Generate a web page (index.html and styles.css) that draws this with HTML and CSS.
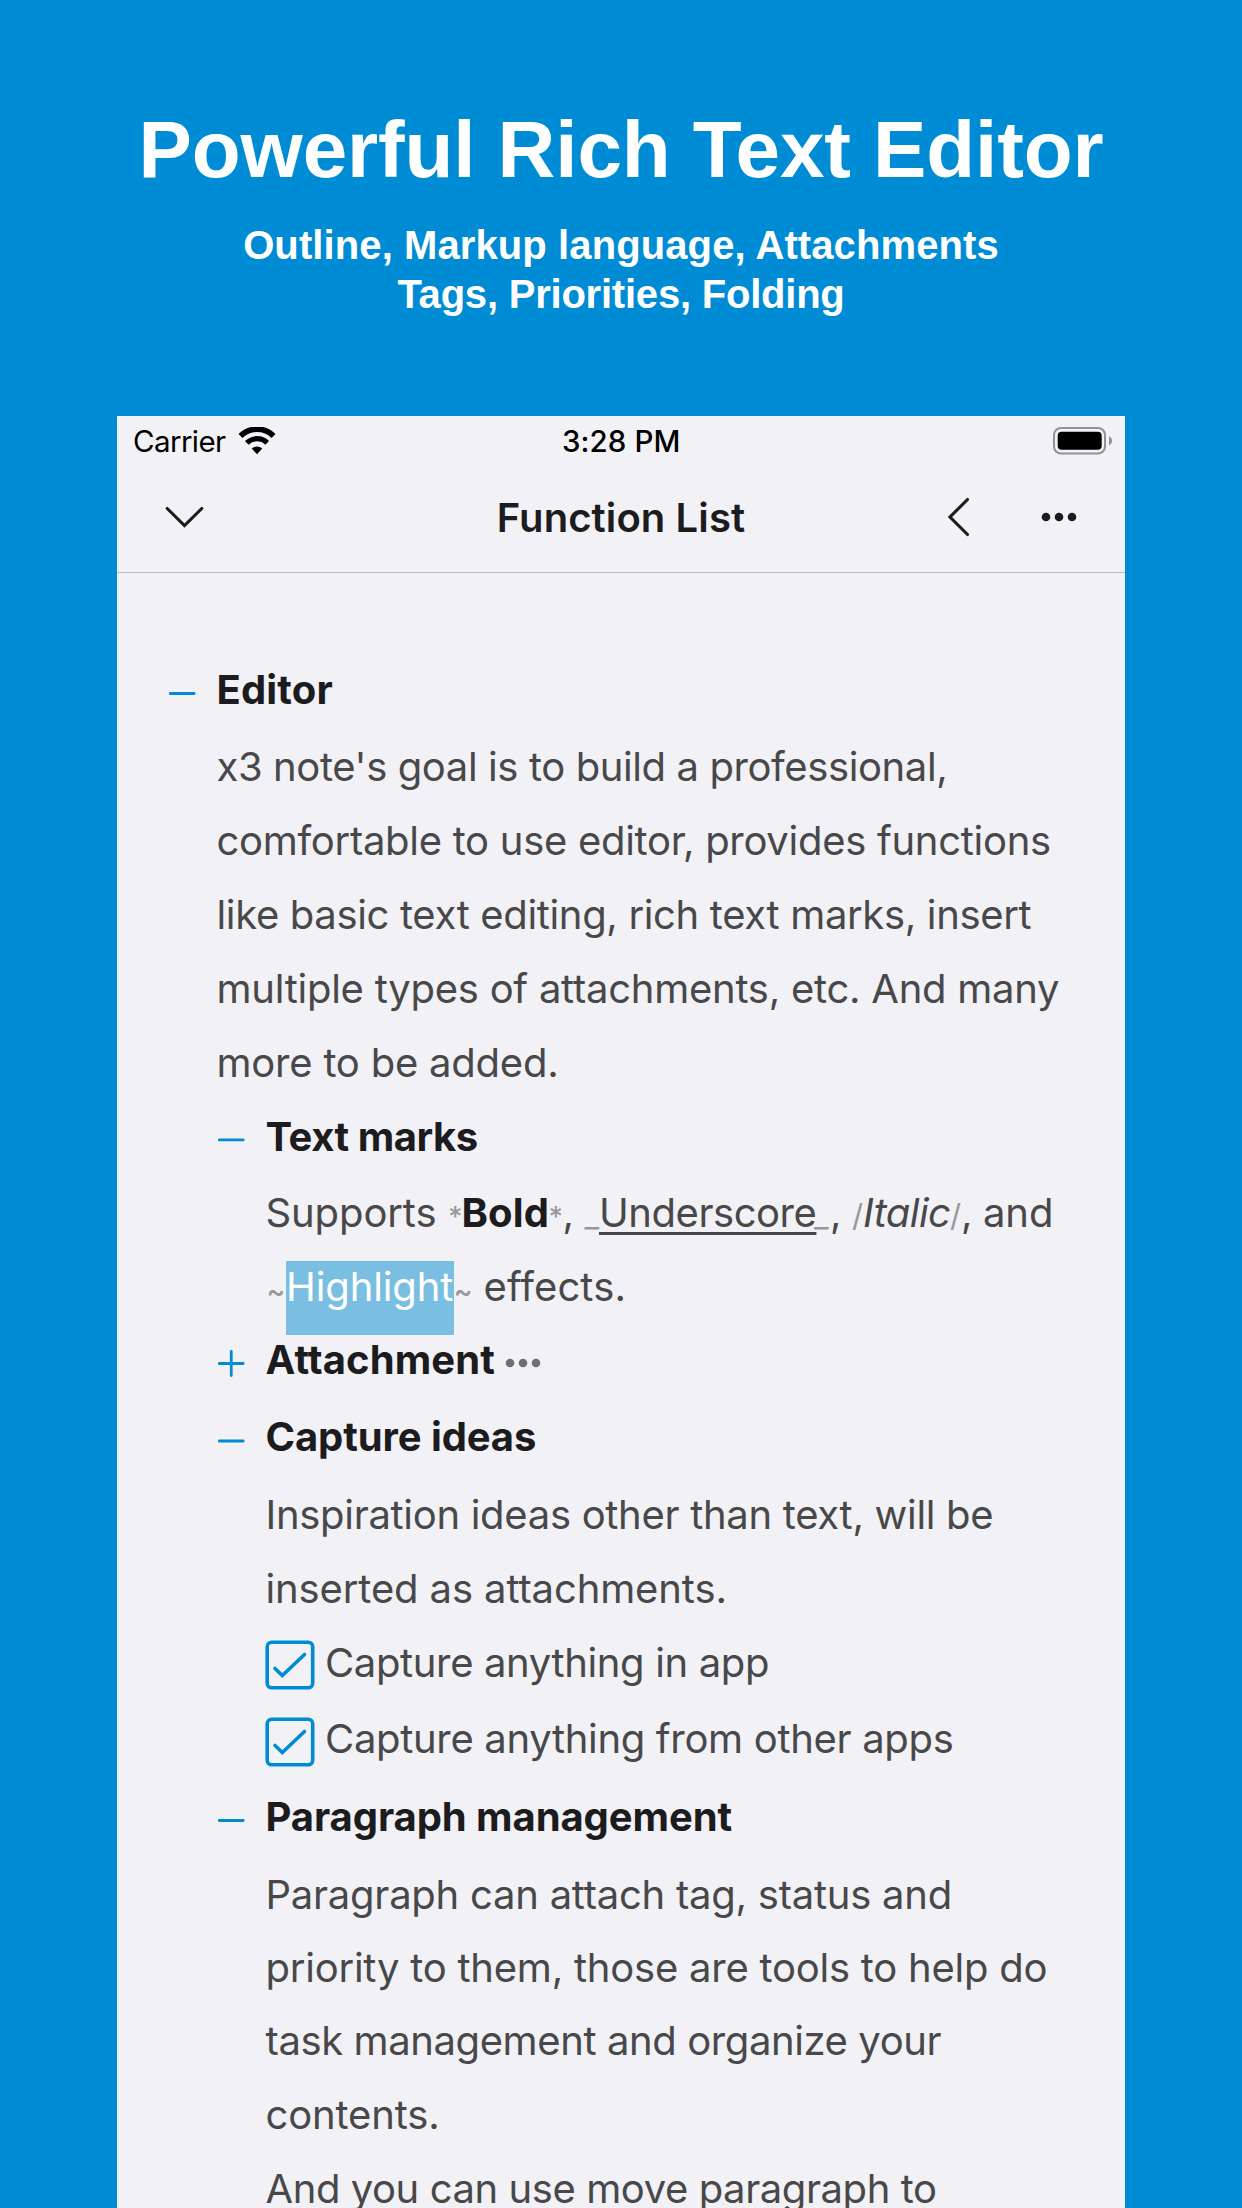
FILE: index.html
```html
<!DOCTYPE html>
<html lang="en">
<head>
<meta charset="utf-8">
<title>Powerful Rich Text Editor</title>
<link rel="stylesheet" href="styles.css">
</head>
<body>
<header class="promo">
  <h1 class="promo-title">Powerful Rich Text Editor</h1>
  <p class="promo-sub"><span class="sub-a">Outline, Markup language, Attachments</span><br><span class="sub-b">Tags, Priorities, Folding</span></p>
</header>
<main class="phone">
  <div class="status">
    <div class="carrier"><span class="carrier-name">Carrier</span>
      <svg class="wifi" width="38" height="28" viewBox="0 0 38 28"><path d="M2.500 8.900A23.500 23.500 0 0 1 35.500 8.900" fill="none" stroke="#000" stroke-width="5.600"/><path d="M8.800 15.900A14.500 14.500 0 0 1 29.200 15.900" fill="none" stroke="#000" stroke-width="5.200"/><path d="M13.700 21.600A7.800 7.800 0 0 1 24.300 21.600L19 27.200Z"/></svg>
    </div>
    <div class="time">3:28 PM</div>
    <svg class="battery" width="60" height="28" viewBox="0 0 60 28"><rect x="1" y="1" width="51" height="25.500" rx="7" fill="none" stroke="#929196" stroke-width="2"/><rect x="4.700" y="4.800" width="44" height="18" rx="4" fill="#000"/><path d="M56 9.200Q59 10.500 59 13.800T56 18.400Z" fill="#929196"/></svg>
  </div>
  <nav class="navbar">
    <svg class="chevron" width="40" height="40" viewBox="0 0 40 40"><path d="M3.200 11.500 20.500 28.500 37.800 11.500" fill="none" stroke="#1c1c1e" stroke-width="3.100" stroke-linecap="round"/></svg>
    <div class="nav-title">Function List</div>
    <div class="nav-actions">
      <svg width="24" height="40" viewBox="0 0 24 40"><path d="M20.500 2.500 3 20 20.500 37.500" fill="none" stroke="#1c1c1e" stroke-width="3.100" stroke-linecap="round"/></svg>
      <svg width="36" height="10" viewBox="0 0 36 10" fill="#1c1c1e"><circle cx="5" cy="5" r="4.300"/><circle cx="18" cy="5" r="4.300"/><circle cx="31" cy="5" r="4.300"/></svg>
    </div>
  </nav>
  <article class="doc">
    <section>
      <h2 class="heading gap-3"><svg class="toggle" width="27" height="27" viewBox="0 0 27 27"><path d="M1.300 13.500H25.200"/></svg><span class="w-editor">Editor</span></h2>
      <div class="body">
        <p class="line t-goal">x3 note's goal is to build a professional,</p>
        <p class="line t-comf">comfortable to use editor, provides functions</p>
        <p class="line t-like">like basic text editing, rich text marks, insert</p>
        <p class="line t-mult">multiple types of attachments, etc. And many</p>
        <p class="line t-more">more to be added.</p>
        <section>
          <h3 class="heading sub gap-2"><svg class="toggle" width="27" height="27" viewBox="0 0 27 27"><path d="M1.300 12.800H25.200"/></svg><span class="w-marks">Text marks</span></h3>
          <div class="body sub">
            <p class="line t-text"><span class="s-supports">Supports </span><span class="mark m-star">*</span><b class="s-bold">Bold</b><span class="mark m-star2">*</span><span class="s-comma">,</span><span class="mark m-us">_</span><u class="s-under">Underscore</u><span class="mark m-us2">_</span><span class="s-comma">,</span><span class="mark m-slash">/</span><i class="s-italic">Italic</i><span class="mark m-slash">/</span><span class="s-comma">,</span>and</p>
            <p class="line t-text less-1"><span class="mark m-tilde">~</span><mark class="s-high">Highlight</mark><span class="mark m-tilde2">~</span> <span class="s-effects">effects.</span></p>
          </div>
        </section>
        <section>
          <h3 class="heading sub gap-3"><svg class="toggle" width="27" height="27" viewBox="0 0 27 27"><path d="M1.300 13.500H25.200M13.250 1.500V25.500"/></svg><span class="w-attach">Attachment</span><svg class="folded" width="36" height="10" viewBox="0 0 36 10" fill="#6f6e72"><circle cx="5" cy="5" r="4.300"/><circle cx="18" cy="5" r="4.300"/><circle cx="31" cy="5" r="4.300"/></svg></h3>
        </section>
        <section>
          <h3 class="heading sub gap-4"><svg class="toggle" width="27" height="27" viewBox="0 0 27 27"><path d="M1.300 14H25.200"/></svg><span class="w-ideas">Capture ideas</span></h3>
          <div class="body sub">
            <p class="line t-insp">Inspiration ideas other than text, will be</p>
            <p class="line t-inserted">inserted as attachments.</p>
            <p class="line check gap-2"><svg width="50" height="50" viewBox="0 0 50 50"><rect x="2.200" y="2.200" width="45.500" height="45.500" rx="4.500"/><path d="M10 28.500 17.300 35.500 39.500 14.500"/></svg><span class="t-inapp">Capture anything in app</span></p>
            <p class="line check check-low gap-4"><svg width="50" height="50" viewBox="0 0 50 50"><rect x="2.200" y="2.200" width="45.500" height="45.500" rx="4.500"/><path d="M10 28.500 17.300 35.500 39.500 14.500"/></svg><span class="t-from">Capture anything from other apps</span></p>
          </div>
        </section>
        <section>
          <h3 class="heading sub gap-4"><svg class="toggle" width="27" height="27" viewBox="0 0 27 27"><path d="M1.300 13.500H25.200"/></svg><span class="w-para">Paragraph management</span></h3>
          <div class="body sub">
            <p class="line t-can less-1">Paragraph can attach tag, status and</p>
            <p class="line t-prio less-1">priority to them, those are tools to help do</p>
            <p class="line t-task">task management and organize your</p>
            <p class="line t-cont">contents.</p>
            <p class="line t-and">And you can use move paragraph to</p>
          </div>
        </section>
      </div>
    </section>
  </article>
</main>
</body>
</html>
```
FILE: styles.css
```css
* { box-sizing: border-box; }
body { margin: 0; width: 1242px; height: 2208px; overflow: hidden; background: #008cd4; display: flex; flex-direction: column; align-items: center; font-family: Inter, "Noto Sans", sans-serif; }
h1, h2, h3, p { margin: 0; font-size: inherit; font-weight: inherit; }
svg { display: block; flex: none; }

.promo { height: 416px; padding-top: 104px; text-align: center; color: #fff; font-family: "Liberation Sans", Arial, sans-serif; font-weight: 700; white-space: nowrap; }
.promo-title { font-size: 80px; line-height: 92px; letter-spacing: -.1px; }
.promo-sub { margin-top: 25px; font-size: 40px; line-height: 49px; }
.sub-a { letter-spacing: .1px; }
.sub-b { letter-spacing: -.217px; }

.phone { width: 1008px; height: 1792px; background: #f2f1f6; overflow: hidden; }
.status { height: 50px; padding: 0 12px 0 16px; display: grid; grid-template-columns: 1fr auto 1fr; align-items: center; font-size: 29.5px; line-height: 50px; color: #000; }
.carrier { display: flex; align-items: center; }
.carrier-name { width: 104.5px; letter-spacing: -.6px; }
.time { font-weight: 550; letter-spacing: .1px; margin: 0 3.5px 0 0; }
.battery { justify-self: end; }

.navbar { height: 107px; padding: 0 48px 4px 47px; display: grid; grid-template-columns: 1fr auto 1fr; align-items: center; border-bottom: 1px solid #bcbbc0; color: #1c1c1e; }
.nav-title { margin: 2px 0 0 1px; font-size: 40px; font-weight: 600; line-height: 60px; letter-spacing: .1px; }
.nav-actions { justify-self: end; display: flex; align-items: center; gap: 70px; }

.doc { padding: 80px 0 0 50px; font-size: 40px; line-height: 74px; color: #48484a; white-space: nowrap; }
.body { padding-left: 49.5px; }
.body.sub { padding-left: 49px; }
.heading { display: flex; align-items: center; height: 74px; font-weight: 700; color: #1c1c1e; }
.toggle { margin: 7px 20.500px 0 2px; fill: none; stroke: #008cd4; stroke-width: 2.8px; stroke-linecap: round; }
.heading.sub .toggle { margin-left: 1.500px; margin-right: 20.500px; }
.folded { margin: 6px 0 0 9.500px; }
.line { height: 74px; }
.gap-2 { margin-bottom: 2px; }
.gap-3 { margin-bottom: 3px; }
.gap-4 { margin-bottom: 4px; }
.less-1 { margin-bottom: -1px; }

.check { display: flex; align-items: center; }
.check svg { margin: 3px 10px 0 -.5px; fill: none; stroke: #008cd4; stroke-width: 3.6px; stroke-linecap: round; }
.check-low svg { margin-top: 6px; }

/* Tracking of each line */
.w-editor { letter-spacing: .172px; }
.w-marks { letter-spacing: -.45px; }
.w-attach { letter-spacing: .12px; }
.w-ideas { letter-spacing: -.1px; }
.w-para { letter-spacing: -.085px; }
.t-goal { letter-spacing: -.397px; }
.t-comf { letter-spacing: -.289px; }
.t-like { letter-spacing: -.344px; }
.t-mult { letter-spacing: -.258px; }
.t-more { letter-spacing: -.22px; }
.t-text { letter-spacing: -.1px; }
.t-insp { letter-spacing: -.3px; }
.t-inserted { letter-spacing: -.12px; }
.t-inapp { letter-spacing: -.36px; }
.t-from { letter-spacing: -.32px; }
.t-can { letter-spacing: -.245px; }
.t-prio { letter-spacing: -.23px; }
.t-task { letter-spacing: -.4px; }
.t-cont { letter-spacing: -.15px; }
.t-and { letter-spacing: -.422px; }

/* Inline marks */
.t-text span, .t-text b, .t-text i { display: inline-block; white-space: pre; }
.t-text .mark { font-size: 28px; font-weight: 500; line-height: 1; color: #98979c; letter-spacing: 0; }
.s-supports { width: 182.5px; }
.m-star { width: 13.5px; }
.m-star2 { width: 14px; }
.s-bold { width: 87px; font-weight: 700; color: #1c1c1e; letter-spacing: .1px; }
.s-comma { width: 22px; }
.t-text .m-us, .t-text .m-us2 { font-size: 32px; font-weight: 400; }
.m-us { width: 14.5px; }
.m-us2 { width: 16px; }
.s-under { display: inline-block; width: 215px; letter-spacing: -.45px; text-decoration: underline; text-decoration-thickness: 2.5px; text-underline-offset: 5px; text-decoration-skip-ink: none; }
.t-text .m-slash { width: 11px; font-size: 31px; font-weight: 400; }
.s-italic { width: 87px; letter-spacing: -.6px; }
.m-tilde { width: 20.5px; padding-left: 1px; }
.m-tilde2 { width: 18.500px; }
.s-high { background: #7abee2; color: #fff; padding: 1px .5px 24px 0; letter-spacing: -.1px; }
.s-effects { letter-spacing: .1px; }
```
